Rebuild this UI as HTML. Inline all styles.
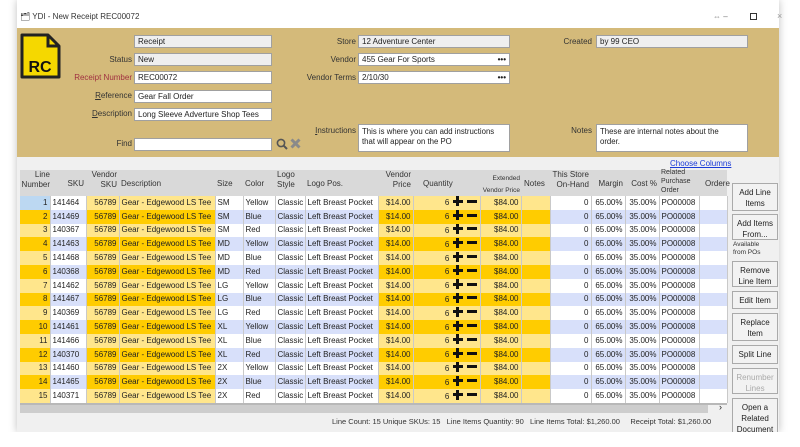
<!DOCTYPE html>
<html><head><meta charset="utf-8"><style>
*{box-sizing:border-box;margin:0;padding:0}
body{width:800px;height:447px;background:#fff;font-family:"Liberation Sans",sans-serif;font-size:8px;color:#222;position:relative;overflow:hidden}
.a{position:absolute}
.win{left:17px;top:0;width:762px;height:432px;background:#f0f0f0;box-shadow:0 0 8px rgba(0,0,0,.25)}
.title{left:17px;top:0;width:762px;height:28px;background:#fff}
.tan{left:17px;top:28px;width:762px;height:129px;background:#d4ba7a}
.lbl{position:absolute;text-align:right;font-size:8px;color:#333}
.fld{position:absolute;height:13px;border:1px solid #a0a0a0;background:#fff;font-size:8px;padding:1px 3px;line-height:10px}
.gr{background:#efefef}
table{position:absolute;left:20px;top:196px;width:707px;border-collapse:collapse;table-layout:fixed}
td{height:13.8px;font-size:8px;line-height:12px;border-right:1px solid #c9c9c9;padding:0 2px;white-space:nowrap;overflow:hidden}
.r{text-align:right}
tr.o .y{background:#ffe68c} tr.e .y{background:#ffcc00}
tr.o .w{background:#fff} tr.e .w{background:#d8e0fa}
.pm{display:inline-block;position:relative;width:26px;height:10px;vertical-align:-1px}
.pm:before{content:"";position:absolute;left:1px;top:3.5px;width:10px;height:3px;background:#111;box-shadow:14px 0 0 0 #111}
.pm:after{content:"";position:absolute;left:4.5px;top:0;width:3px;height:10px;background:#111}
.hd{position:absolute;top:170px;height:26px;font-size:8px;color:#333;line-height:9.5px}
.btn{position:absolute;left:732px;width:46px;border:1px solid #aaa;background:#f2f2f2;font-size:8px;text-align:center;line-height:11px;padding-top:3px;color:#222}
</style></head><body>
<div class="a win"></div>
<div class="a title"></div>
<div class="a" style="left:20px;top:12px;font-size:8px;color:#333">🗂 YDI - New Receipt REC00072</div>
<div class="a" style="left:713px;top:12px;font-size:8px;color:#777">⇔ –</div>
<div class="a" style="left:750px;top:13px;width:7px;height:7px;border:1px solid #333"></div>
<div class="a" style="left:777px;top:11px;font-size:9px;color:#999">×</div>
<div class="a tan"></div>
<svg class="a" style="left:20px;top:33px" width="41" height="46" viewBox="0 0 41 46"><path d="M2 2H28L39 13V44H2Z" fill="#f5d800" stroke="#222" stroke-width="3" stroke-linejoin="round"/><path d="M28 2V13H39" fill="none" stroke="#222" stroke-width="3"/><text x="20" y="39" font-family="Liberation Sans" font-weight="bold" font-size="16" text-anchor="middle" fill="#111">RC</text></svg>
<div class="fld gr" style="left:134px;top:35px;width:138px">Receipt</div>
<div class="lbl" style="left:60px;top:55px;width:72px">Status</div><div class="fld gr" style="left:134px;top:53px;width:138px">New</div>
<div class="lbl" style="left:60px;top:73px;width:72px;color:#a03040">Receipt Number</div><div class="fld" style="left:134px;top:71px;width:138px">REC00072</div>
<div class="lbl" style="left:60px;top:91px;width:72px"><u>R</u>eference</div><div class="fld" style="left:134px;top:90px;width:138px">Gear Fall Order</div>
<div class="lbl" style="left:60px;top:109px;width:72px"><u>D</u>escription</div><div class="fld" style="left:134px;top:108px;width:138px">Long Sleeve Adverture Shop Tees</div>
<div class="lbl" style="left:60px;top:139px;width:72px">Find</div><div class="fld" style="left:134px;top:138px;width:138px"></div>
<svg class="a" style="left:276px;top:138px" width="12" height="12" viewBox="0 0 12 12"><circle cx="5" cy="5" r="3.6" fill="none" stroke="#555" stroke-width="1.6"/><path d="M7.6 7.6L11 11" stroke="#555" stroke-width="2"/></svg>
<svg class="a" style="left:290px;top:138px" width="11" height="11" viewBox="0 0 11 11"><path d="M1.5 1.5L9.5 9.5M9.5 1.5L1.5 9.5" stroke="#8a8a8a" stroke-width="3"/></svg>
<div class="lbl" style="left:290px;top:37px;width:66px">Store</div><div class="fld gr" style="left:358px;top:35px;width:152px">12 Adventure Center</div>
<div class="lbl" style="left:290px;top:55px;width:66px">Vendor</div><div class="fld" style="left:358px;top:53px;width:152px">455 Gear For Sports<span style="float:right;font-weight:bold">•••</span></div>
<div class="lbl" style="left:290px;top:73px;width:66px">Vendor Terms</div><div class="fld" style="left:358px;top:71px;width:152px">2/10/30<span style="float:right;font-weight:bold">•••</span></div>
<div class="lbl" style="left:290px;top:126px;width:66px"><u>I</u>nstructions</div><div class="fld" style="left:358px;top:124px;width:152px;height:28px;line-height:10px;padding:2px 10px 0 3px;font-size:7.8px">This is where you can add instructions that will appear on the PO</div>
<div class="lbl" style="left:530px;top:126px;width:62px">Notes</div><div class="fld" style="left:596px;top:124px;width:152px;height:28px;line-height:10px;padding:2px 14px 0 3px;font-size:7.8px">These are internal notes about the order.</div>
<div class="lbl" style="left:530px;top:37px;width:62px">Created</div><div class="fld gr" style="left:596px;top:35px;width:152px">by 99 CEO</div>
<div class="a" style="left:670px;top:159px;font-size:8px;color:#1a3ad8;text-decoration:underline">Choose Columns</div>
<div class="a" style="left:20px;top:170px;width:707px;height:26px;background:#d9d9d9"></div>
<div class="hd r" style="left:20px;width:30px">Line<br>Number</div>
<div class="hd r" style="left:50px;width:34px;top:179px">SKU</div>
<div class="hd r" style="left:86px;width:31px">Vendor<br>SKU</div>
<div class="hd" style="left:121px;top:179px">Description</div>
<div class="hd" style="left:217px;top:179px">Size</div>
<div class="hd" style="left:245px;top:179px">Color</div>
<div class="hd" style="left:277px">Logo<br>Style</div>
<div class="hd" style="left:307px;top:179px">Logo Pos.</div>
<div class="hd r" style="left:378px;width:33px">Vendor<br>Price</div>
<div class="hd" style="left:423px;top:179px">Quantity</div>
<div class="hd r" style="left:480px;width:40px;font-size:6.5px;top:173px;line-height:12px">Extended<br>Vendor Price</div>
<div class="hd" style="left:524px;top:179px">Notes</div>
<div class="hd r" style="left:550px;width:39px">This Store<br>On-Hand</div>
<div class="hd r" style="left:591px;width:32px;top:179px">Margin</div>
<div class="hd r" style="left:625px;width:32px;top:179px">Cost %</div>
<div class="hd" style="left:661px;top:168px;font-size:7px;line-height:9px">Related<br>Purchase<br>Order</div>
<div class="hd" style="left:705px;top:179px">Ordere</div>
<table>
<colgroup><col style="width:30px"><col style="width:36px"><col style="width:33px"><col style="width:96px"><col style="width:28px"><col style="width:32px"><col style="width:30px"><col style="width:73px"><col style="width:35px"><col style="width:67px"><col style="width:41px"><col style="width:29px"><col style="width:41px"><col style="width:34px"><col style="width:34px"><col style="width:40px"><col style="width:28px"></colgroup>
<tr class="o"><td class="r" style="background:#bcd8f2">1</td><td class="w">141464</td><td class="y r">56789</td><td class="y">Gear - Edgewood LS Tee</td><td class="w">SM</td><td class="w">Yellow</td><td class="w">Classic</td><td class="w">Left Breast Pocket</td><td class="y r">$14.00</td><td class="y r">6 <span class="pm"></span></td><td class="y r">$84.00</td><td class="y"></td><td class="w r">0</td><td class="w r">65.00%</td><td class="w r">35.00%</td><td class="w">PO00008</td><td class="w"></td></tr>
<tr class="e"><td class="y r">2</td><td class="w">141469</td><td class="y r">56789</td><td class="y">Gear - Edgewood LS Tee</td><td class="w">SM</td><td class="w">Blue</td><td class="w">Classic</td><td class="w">Left Breast Pocket</td><td class="y r">$14.00</td><td class="y r">6 <span class="pm"></span></td><td class="y r">$84.00</td><td class="y"></td><td class="w r">0</td><td class="w r">65.00%</td><td class="w r">35.00%</td><td class="w">PO00008</td><td class="w"></td></tr>
<tr class="o"><td class="y r">3</td><td class="w">140367</td><td class="y r">56789</td><td class="y">Gear - Edgewood LS Tee</td><td class="w">SM</td><td class="w">Red</td><td class="w">Classic</td><td class="w">Left Breast Pocket</td><td class="y r">$14.00</td><td class="y r">6 <span class="pm"></span></td><td class="y r">$84.00</td><td class="y"></td><td class="w r">0</td><td class="w r">65.00%</td><td class="w r">35.00%</td><td class="w">PO00008</td><td class="w"></td></tr>
<tr class="e"><td class="y r">4</td><td class="w">141463</td><td class="y r">56789</td><td class="y">Gear - Edgewood LS Tee</td><td class="w">MD</td><td class="w">Yellow</td><td class="w">Classic</td><td class="w">Left Breast Pocket</td><td class="y r">$14.00</td><td class="y r">6 <span class="pm"></span></td><td class="y r">$84.00</td><td class="y"></td><td class="w r">0</td><td class="w r">65.00%</td><td class="w r">35.00%</td><td class="w">PO00008</td><td class="w"></td></tr>
<tr class="o"><td class="y r">5</td><td class="w">141468</td><td class="y r">56789</td><td class="y">Gear - Edgewood LS Tee</td><td class="w">MD</td><td class="w">Blue</td><td class="w">Classic</td><td class="w">Left Breast Pocket</td><td class="y r">$14.00</td><td class="y r">6 <span class="pm"></span></td><td class="y r">$84.00</td><td class="y"></td><td class="w r">0</td><td class="w r">65.00%</td><td class="w r">35.00%</td><td class="w">PO00008</td><td class="w"></td></tr>
<tr class="e"><td class="y r">6</td><td class="w">140368</td><td class="y r">56789</td><td class="y">Gear - Edgewood LS Tee</td><td class="w">MD</td><td class="w">Red</td><td class="w">Classic</td><td class="w">Left Breast Pocket</td><td class="y r">$14.00</td><td class="y r">6 <span class="pm"></span></td><td class="y r">$84.00</td><td class="y"></td><td class="w r">0</td><td class="w r">65.00%</td><td class="w r">35.00%</td><td class="w">PO00008</td><td class="w"></td></tr>
<tr class="o"><td class="y r">7</td><td class="w">141462</td><td class="y r">56789</td><td class="y">Gear - Edgewood LS Tee</td><td class="w">LG</td><td class="w">Yellow</td><td class="w">Classic</td><td class="w">Left Breast Pocket</td><td class="y r">$14.00</td><td class="y r">6 <span class="pm"></span></td><td class="y r">$84.00</td><td class="y"></td><td class="w r">0</td><td class="w r">65.00%</td><td class="w r">35.00%</td><td class="w">PO00008</td><td class="w"></td></tr>
<tr class="e"><td class="y r">8</td><td class="w">141467</td><td class="y r">56789</td><td class="y">Gear - Edgewood LS Tee</td><td class="w">LG</td><td class="w">Blue</td><td class="w">Classic</td><td class="w">Left Breast Pocket</td><td class="y r">$14.00</td><td class="y r">6 <span class="pm"></span></td><td class="y r">$84.00</td><td class="y"></td><td class="w r">0</td><td class="w r">65.00%</td><td class="w r">35.00%</td><td class="w">PO00008</td><td class="w"></td></tr>
<tr class="o"><td class="y r">9</td><td class="w">140369</td><td class="y r">56789</td><td class="y">Gear - Edgewood LS Tee</td><td class="w">LG</td><td class="w">Red</td><td class="w">Classic</td><td class="w">Left Breast Pocket</td><td class="y r">$14.00</td><td class="y r">6 <span class="pm"></span></td><td class="y r">$84.00</td><td class="y"></td><td class="w r">0</td><td class="w r">65.00%</td><td class="w r">35.00%</td><td class="w">PO00008</td><td class="w"></td></tr>
<tr class="e"><td class="y r">10</td><td class="w">141461</td><td class="y r">56789</td><td class="y">Gear - Edgewood LS Tee</td><td class="w">XL</td><td class="w">Yellow</td><td class="w">Classic</td><td class="w">Left Breast Pocket</td><td class="y r">$14.00</td><td class="y r">6 <span class="pm"></span></td><td class="y r">$84.00</td><td class="y"></td><td class="w r">0</td><td class="w r">65.00%</td><td class="w r">35.00%</td><td class="w">PO00008</td><td class="w"></td></tr>
<tr class="o"><td class="y r">11</td><td class="w">141466</td><td class="y r">56789</td><td class="y">Gear - Edgewood LS Tee</td><td class="w">XL</td><td class="w">Blue</td><td class="w">Classic</td><td class="w">Left Breast Pocket</td><td class="y r">$14.00</td><td class="y r">6 <span class="pm"></span></td><td class="y r">$84.00</td><td class="y"></td><td class="w r">0</td><td class="w r">65.00%</td><td class="w r">35.00%</td><td class="w">PO00008</td><td class="w"></td></tr>
<tr class="e"><td class="y r">12</td><td class="w">140370</td><td class="y r">56789</td><td class="y">Gear - Edgewood LS Tee</td><td class="w">XL</td><td class="w">Red</td><td class="w">Classic</td><td class="w">Left Breast Pocket</td><td class="y r">$14.00</td><td class="y r">6 <span class="pm"></span></td><td class="y r">$84.00</td><td class="y"></td><td class="w r">0</td><td class="w r">65.00%</td><td class="w r">35.00%</td><td class="w">PO00008</td><td class="w"></td></tr>
<tr class="o"><td class="y r">13</td><td class="w">141460</td><td class="y r">56789</td><td class="y">Gear - Edgewood LS Tee</td><td class="w">2X</td><td class="w">Yellow</td><td class="w">Classic</td><td class="w">Left Breast Pocket</td><td class="y r">$14.00</td><td class="y r">6 <span class="pm"></span></td><td class="y r">$84.00</td><td class="y"></td><td class="w r">0</td><td class="w r">65.00%</td><td class="w r">35.00%</td><td class="w">PO00008</td><td class="w"></td></tr>
<tr class="e"><td class="y r">14</td><td class="w">141465</td><td class="y r">56789</td><td class="y">Gear - Edgewood LS Tee</td><td class="w">2X</td><td class="w">Blue</td><td class="w">Classic</td><td class="w">Left Breast Pocket</td><td class="y r">$14.00</td><td class="y r">6 <span class="pm"></span></td><td class="y r">$84.00</td><td class="y"></td><td class="w r">0</td><td class="w r">65.00%</td><td class="w r">35.00%</td><td class="w">PO00008</td><td class="w"></td></tr>
<tr class="o"><td class="y r">15</td><td class="w">140371</td><td class="y r">56789</td><td class="y">Gear - Edgewood LS Tee</td><td class="w">2X</td><td class="w">Red</td><td class="w">Classic</td><td class="w">Left Breast Pocket</td><td class="y r">$14.00</td><td class="y r">6 <span class="pm"></span></td><td class="y r">$84.00</td><td class="y"></td><td class="w r">0</td><td class="w r">65.00%</td><td class="w r">35.00%</td><td class="w">PO00008</td><td class="w"></td></tr>
</table>
<div class="a" style="left:20px;top:403px;width:707px;height:2px;background:#b8b8b8"></div>
<div class="a" style="left:20px;top:405px;width:688px;height:8px;background:#cdcdcd"></div>
<div class="a" style="left:719px;top:402px;font-size:9px">›</div>
<div class="a" style="left:332px;top:417px;font-size:7.5px;color:#333;white-space:nowrap">Line Count: 15 Unique SKUs: 15 &nbsp; Line Items Quantity: 90 &nbsp; Line Items Total: $1,260.00 &nbsp;&nbsp;&nbsp; Receipt Total: $1,260.00</div>
<div class="btn" style="top:183px;height:28px">Add Line<br>Items</div>
<div class="btn" style="top:214px;height:26px">Add Items<br>From...</div>
<div class="a" style="left:733px;top:241px;font-size:6.5px;line-height:8px;color:#333">Available<br>from POs</div>
<div class="btn" style="top:261px;height:26px">Remove<br>Line Item</div>
<div class="btn" style="top:291px;height:18px">Edit Item</div>
<div class="btn" style="top:313px;height:28px">Replace<br>Item</div>
<div class="btn" style="top:345px;height:19px">Split Line</div>
<div class="btn" style="top:368px;height:26px;color:#aaa">Renumber<br>Lines</div>
<div class="btn" style="top:398px;height:34px;border-bottom:none">Open a<br>Related<br>Document</div>
<div class="a" style="left:0;top:432px;width:800px;height:15px;background:#fff"></div>
</body></html>
